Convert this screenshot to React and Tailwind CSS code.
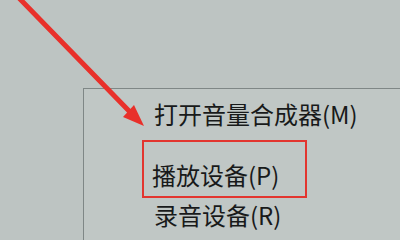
// Photo of a Windows tray-volume context menu, with a red annotation arrow and box.

const CJK = { fontFamily: '"Noto Sans CJK SC", "Noto Sans", sans-serif' }

function Arrow() {
  // Annotation drawn over the screen: a long red arrow pointing at the menu.
  return (
    <svg className="absolute inset-0 pointer-events-none" width="400" height="240" viewBox="0 0 400 240">
      <line x1="19" y1="-2" x2="131" y2="113" stroke="#e8302a" strokeWidth="5" strokeLinecap="round" />
      <polygon points="144,126 123,117 134,105" fill="#e8302a" />
    </svg>
  )
}

export default function App() {
  return (
    <div className="relative w-[400px] h-[240px] overflow-hidden bg-[#bdc4c2] pt-[88px] pl-[83px]" style={CJK}>
      <div className="h-full border-t border-l border-[#7f8786] bg-[#c0c7c5] pl-[58px] text-[24px] leading-[24px] text-[#181a1a]">
        <div className="pt-[13px] pl-[12px]">打开音量合成器(M)</div>
        <div className="mt-[14px] w-[165px] border-2 border-[#e2352f] pt-[21px] pb-[9px] pl-[8px]">
          播放设备(P)
        </div>
        <div className="mt-[5px] pl-[12px]">录音设备(R)</div>
      </div>
      <Arrow />
    </div>
  )
}
